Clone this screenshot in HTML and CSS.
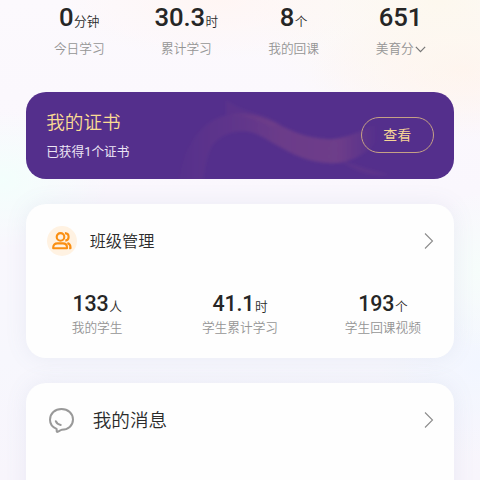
FILE: index.html
```html
<!DOCTYPE html>
<html lang="zh-CN">
<head>
<meta charset="utf-8">
<title>我的</title>
<link rel="stylesheet" href="styles.css">
</head>
<body>
<main class="page">
  <section class="stats overview">
    <div class="stat"><p class="value"><b>0</b>分钟</p><p class="label">今日学习</p></div>
    <div class="stat"><p class="value"><b>30.3</b>时</p><p class="label">累计学习</p></div>
    <div class="stat"><p class="value"><b>8</b>个</p><p class="label">我的回课</p></div>
    <div class="stat"><p class="value"><b>651</b></p><p class="label">美育分<svg class="caret" viewBox="0 0 12 12"><path d="M1.700 3.500 6 8l4.300-4.500"/></svg></p></div>
  </section>

  <section class="certificate">
    <svg class="ribbon" viewBox="0 0 429 87" preserveAspectRatio="none">
      <defs>
        <linearGradient id="silk" x1="0" x2="1" y1="0" y2="0">
          <stop offset="0" stop-color="#a45a83" stop-opacity=".03"/>
          <stop offset=".3" stop-color="#a45a83" stop-opacity=".15"/>
          <stop offset=".5" stop-color="#a45a83" stop-opacity=".28"/>
          <stop offset=".8" stop-color="#a45a83" stop-opacity=".32"/>
          <stop offset="1" stop-color="#a45a83" stop-opacity="0"/>
        </linearGradient>
        <filter id="soft" x="-10%" y="-20%" width="120%" height="140%"><feGaussianBlur stdDeviation="1.500"/></filter>
      </defs>
      <g filter="url(#soft)">
        <path fill="url(#silk)" d="M153 90C157 60 171 36 190 27C209 18 228 21 244 28C262 37 280 47 304 47C320 47 336 38 350 33L352 48C340 63 322 72 304 71C282 70 267 62 251 53C239 46 229 39 218 39C201 39 189 46 183 60Q179 73 177 90Z"/>
        <path fill="#a45a83" fill-opacity=".08" d="M200 8C220 22 238 20 256 33L244 34C226 26 211 21 200 23Z"/>
        <path fill="#a45a83" fill-opacity=".1" d="M316 69C331 72 344 78 363 82C346 85 331 80 316 69Z"/>
      </g>
    </svg>
    <div class="certificate-text">
      <h2>我的证书</h2>
      <p>已获得1个证书</p>
    </div>
    <a class="view">查看</a>
  </section>

  <section class="card class-card">
    <header class="card-head">
      <span class="badge">
        <svg viewBox="0 0 20 20"><circle cx="8.500" cy="5.900" r="3.800"/><path d="M1.200 17.200v-.6c0-2.700 1.600-4.200 4.200-4.200h5.400c2.600 0 4.200 1.500 4.200 4.200v.6ZM12.900 2.100c2.300.1 3.700 1.700 3.700 3.800s-1.400 3.500-3.300 3.700M15.400 12c2 .7 3.100 2.100 3.100 4.300v.9h-1.400"/></svg>
      </span>
      <h2>班级管理</h2>
      <svg class="arrow" viewBox="0 0 10 18"><path d="M1 1.500 8.500 9 1 16.500"/></svg>
    </header>
    <div class="stats">
      <div class="stat"><p class="value"><b>133</b>人</p><p class="label">我的学生</p></div>
      <div class="stat"><p class="value"><b>41.1</b>时</p><p class="label">学生累计学习</p></div>
      <div class="stat"><p class="value"><b>193</b>个</p><p class="label">学生回课视频</p></div>
    </div>
  </section>

  <section class="card message-card">
    <header class="card-head">
      <svg class="bubble" viewBox="0 0 27 27"><path d="M8.600 21.900C4.400 20.200 2 16.800 2 12.800 2 6.500 7 2 13.500 2S25 6.500 25 12.600 20 22.700 13.800 22.700c-1.400.2-3 1.800-4.500 2.200-1 .2-.4-1.600-.7-3Z"/><path d="M7.800 14.200c.8 2.100 2.600 3.400 4.900 3.700"/></svg>
      <h2>我的消息</h2>
      <svg class="arrow" viewBox="0 0 10 18"><path d="M1 1.500 8.500 9 1 16.500"/></svg>
    </header>
  </section>
</main>
</body>
</html>
```
FILE: styles.css
```css
* { box-sizing: border-box; }
body, h2, p { margin: 0; }
body {
  height: 480px;
  overflow: hidden;
  font-family: Roboto, "Noto Sans CJK SC", sans-serif;
  font-weight: 350;
  color: #2b2b2b;
  background:
    radial-gradient(ellipse 190px 130px at 440px 0, #fdf8ee, #fdf8ee00),
    radial-gradient(ellipse 150px 70px at 460px 70px, #fff3ef, #fff3ef00),
    radial-gradient(ellipse 160px 60px at 220px 0, #fff6f4, #fff6f400),
    radial-gradient(ellipse 110px 70px at 0 180px, #f3fffc, #f3fffc00),
    radial-gradient(ellipse 60px 80px at 480px 270px, #f6fdfb, #f6fdfb00),
    radial-gradient(ellipse 100px 90px at 480px 365px, #f2f6ff, #f2f6ff00),
    linear-gradient(#fcf9fd, #faf7fd 40%, #f7f7fd 75%, #f8f5fc);
}
.page { height: 480px; padding: 0 25.700px; overflow: hidden; }
h2 { font-weight: 350; }

.stats { display: flex; }
.stat { flex: 1 1 0; text-align: center; white-space: nowrap; }
.value { font-size: 12.700px; line-height: 26px; height: 26px; }
.value b { font-size: 21.400px; font-weight: 500; margin-right: .5px; color: #262626; letter-spacing: -.1px; }
.label { font-size: 12.700px; line-height: 18px; color: #959595; }
.overview { height: 91.500px; padding-top: 4px; }
.overview .value b { font-size: 25.700px; }
.overview .label { margin-top: 10px; }
.caret { width: 13px; height: 13px; margin-right: -1px; vertical-align: -3px; fill: none; stroke: #777; stroke-width: 1.100; }

.certificate {
  position: relative;
  display: flex;
  align-items: center;
  justify-content: space-between;
  height: 87.300px;
  padding: 0 20.500px 0 20.500px;
  overflow: hidden;
  border-radius: 20px;
  background: #542f8c;
}
.ribbon { position: absolute; inset: 0; width: 100%; height: 100%; }
.certificate-text { position: relative; }
.certificate h2 { font-size: 18.600px; line-height: 28px; color: #fbdc93; }
.certificate p { margin-top: 6px; font-size: 12.700px; font-weight: 400; line-height: 18px; color: #ece5f4; }
.view {
  position: relative;
  width: 73px;
  height: 36px;
  border: 1px solid #c5a185;
  border-radius: 18px;
  font-size: 14px;
  font-weight: 400;
  line-height: 34px;
  text-align: center;
  color: #f5d496;
}

.card {
  margin-top: 25.700px;
  border-radius: 20px;
  background: #fefefe;
  box-shadow: 0 0 22px rgba(105, 130, 165, .1);
}
.card-head { display: flex; align-items: center; height: 74px; padding: 0 20.500px 0 21.500px; }
.card-head h2 { flex: 1; line-height: 24px; padding-top: 2px; }
.class-card { height: 153.300px; }
.class-card h2 { font-size: 16.200px; }
.class-card .stats { padding-top: 13px; }
.class-card .label { margin-top: 2px; }
.badge { display: grid; place-items: center; width: 30px; height: 30px; margin-right: 12.500px; border-radius: 50%; background: #fff2e2; }
.badge svg { width: 20px; height: 20px; fill: none; stroke: #fa8f12; stroke-width: 2.100; stroke-linejoin: round; }
.arrow { width: 10px; height: 18px; fill: none; stroke: #8c8c8c; stroke-width: 1.100; }
.message-card { height: 140px; }
.message-card .card-head { padding-left: 22px; }
.message-card h2 { font-size: 18.600px; }
.bubble { width: 27px; height: 27px; margin-right: 18px; fill: none; stroke: #999; stroke-width: 2; stroke-linecap: round; stroke-linejoin: round; }
```
